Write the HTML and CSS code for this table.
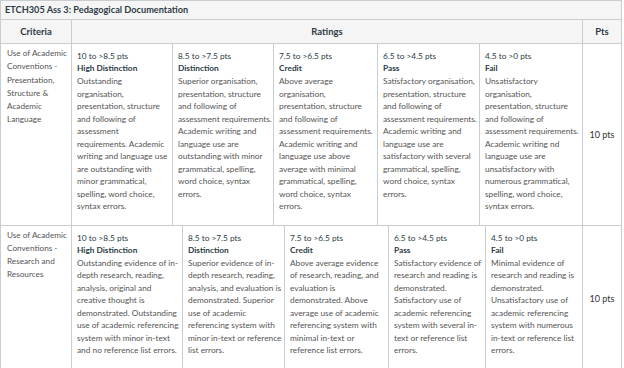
FILE: index.html
```html
<!DOCTYPE html>
<html lang="en">
<head>
<meta charset="utf-8">
<title>ETCH305 Ass 3: Pedagogical Documentation</title>
<link rel="stylesheet" href="styles.css">
</head>
<body>
<div class="rubric">
  <div class="title">ETCH305 Ass 3: Pedagogical Documentation</div>
  <div class="row head">
    <div class="crit-h">Criteria</div>
    <div class="ratings-h">Ratings</div>
    <div class="pts-h">Pts</div>
  </div>

  <div class="row r1">
    <div class="crit">Use of Academic Conventions - Presentation, Structure &amp; Academic Language</div>
    <div class="ratings">
      <div class="rating">
        <div class="range">10 to &gt;8.5 pts</div>
        <div class="name">High Distinction</div>
        <div class="desc">Outstanding organisation, presentation, structure and following of assessment requirements. Academic writing and language use are outstanding with minor grammatical, spelling, word choice, syntax errors.</div>
      </div>
      <div class="rating">
        <div class="range">8.5 to &gt;7.5 pts</div>
        <div class="name">Distinction</div>
        <div class="desc">Superior organisation, presentation, structure and following of assessment requirements. Academic writing and language use are outstanding with minor grammatical, spelling, word choice, syntax errors.</div>
      </div>
      <div class="rating">
        <div class="range">7.5 to &gt;6.5 pts</div>
        <div class="name">Credit</div>
        <div class="desc">Above average organisation, presentation, structure and following of assessment requirements. Academic writing and language use above average with minimal grammatical, spelling, word choice, syntax errors.</div>
      </div>
      <div class="rating">
        <div class="range">6.5 to &gt;4.5 pts</div>
        <div class="name">Pass</div>
        <div class="desc">Satisfactory organisation, presentation, structure and following of assessment requirements. Academic writing and language use are satisfactory with several grammatical, spelling, word choice, syntax errors.</div>
      </div>
      <div class="rating">
        <div class="range">4.5 to &gt;0 pts</div>
        <div class="name">Fail</div>
        <div class="desc">Unsatisfactory organisation, presentation, structure and following of assessment requirements. Academic writing nd language use are unsatisfactory with numerous grammatical, spelling, word choice, syntax errors.</div>
      </div>
    </div>
    <div class="pts">10 pts</div>
  </div>

  <div class="row r2">
    <div class="crit">Use of Academic Conventions - Research and Resources</div>
    <div class="ratings">
      <div class="rating">
        <div class="range">10 to &gt;8.5 pts</div>
        <div class="name">High Distinction</div>
        <div class="desc">Outstanding evidence of in-depth research, reading, analysis, original and creative thought is demonstrated. Outstanding use of academic referencing system with minor in-text and no reference list errors.</div>
      </div>
      <div class="rating">
        <div class="range">8.5 to &gt;7.5 pts</div>
        <div class="name">Distinction</div>
        <div class="desc">Superior evidence of in-depth research, reading, analysis, and evaluation is demonstrated. Superior use of academic referencing system with minor in-text or reference list errors.</div>
      </div>
      <div class="rating">
        <div class="range">7.5 to &gt;6.5 pts</div>
        <div class="name">Credit</div>
        <div class="desc">Above average evidence of research, reading, and evaluation is demonstrated. Above average use of academic referencing system with minimal in-text or reference list errors.</div>
      </div>
      <div class="rating">
        <div class="range">6.5 to &gt;4.5 pts</div>
        <div class="name">Pass</div>
        <div class="desc">Satisfactory evidence of research and reading is demonstrated. Satisfactory use of academic referencing system with several in-text or reference list errors.</div>
      </div>
      <div class="rating">
        <div class="range">4.5 to &gt;0 pts</div>
        <div class="name">Fail</div>
        <div class="desc">Minimal evidence of research and reading is demonstrated. Unsatisfactory use of academic referencing system with numerous in-text or reference list errors.</div>
      </div>
    </div>
    <div class="pts">10 pts</div>
  </div>
</div>
</body>
</html>
```

FILE: styles.css
```css
* { box-sizing: border-box; }
html, body { margin: 0; padding: 0; background: #fff; }
body {
  font-family: Lato, "Open Sans", Arial, sans-serif;
  color: #2d3b45;
  width: 624px;
  height: 368px;
  overflow: hidden;
}
.rubric {
  width: 622px;
  border: 1px solid #c7cdd1;
  border-bottom: none;
}
.title {
  height: 19px;
  background: #f5f5f5;
  border-bottom: 1px solid #c7cdd1;
  font-weight: 700;
  font-size: 9.2px;
  line-height: 18px;
  padding-left: 4px;
}
.row {
  display: grid;
  grid-template-columns: 71px 511px 38px;
  border-bottom: 1px solid #c7cdd1;
}
.head {
  height: 24px;
  background: #f5f5f5;
  font-weight: 700;
  font-size: 9.5px;
}
.head > div {
  display: flex;
  align-items: center;
  justify-content: center;
}
.crit-h, .ratings-h { border-right: 1px solid #c7cdd1; }
.crit {
  border-right: 1px solid #c7cdd1;
  padding: 3px 2px 0 6px;
  font-size: 8.2px;
  line-height: 13.3px;
  color: #555;
}
.ratings {
  display: grid;
  border-right: 1px solid #c7cdd1;
}
.r1 .ratings { grid-template-columns: 101px 101px 104px 102px 103px; }
.r2 .ratings { grid-template-columns: 111px 102px 104px 97px 97px; }
.r2 { min-height: 147px; }
.rating {
  border-right: 1px solid #c7cdd1;
  padding: 7px 1px 12px 5px;
}
.rating:last-child { border-right: none; }
.r1 .rating:nth-child(1) { padding-right: 3px; }
.r1 .rating:nth-child(3) { padding-right: 4px; }
.r1 .rating:nth-child(5) { padding-right: 3px; }
.range {
  font-size: 8.3px;
  line-height: 11px;
}
.name {
  font-size: 8.3px;
  font-weight: 700;
  line-height: 12px;
}
.desc {
  font-size: 8.3px;
  line-height: 12.5px;
  color: #555;
  margin-top: 1px;
}
.pts {
  display: flex;
  align-items: center;
  justify-content: center;
  font-size: 9px;
  color: #333;
}
```
